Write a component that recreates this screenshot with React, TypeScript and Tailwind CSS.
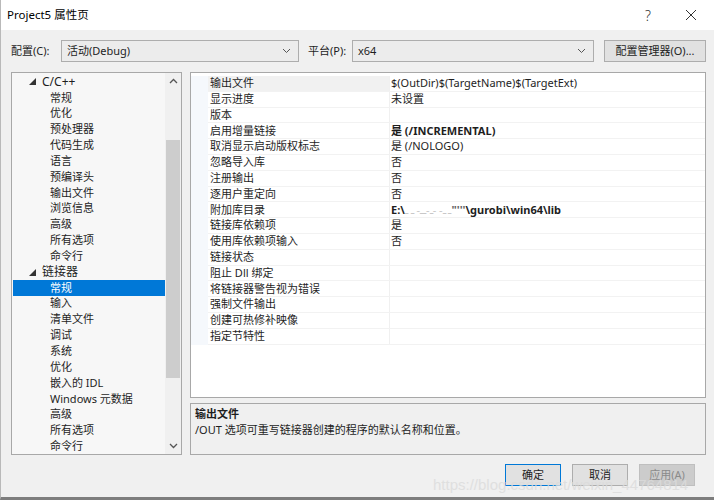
import React from "react";

const FONT = { fontFamily: '"Noto Sans", "Noto Sans CJK SC", sans-serif' };

const tree: { label: string; level: number; selected?: boolean }[] = [
  { label: "C/C++", level: 0 },
  { label: "常规", level: 1 },
  { label: "优化", level: 1 },
  { label: "预处理器", level: 1 },
  { label: "代码生成", level: 1 },
  { label: "语言", level: 1 },
  { label: "预编译头", level: 1 },
  { label: "输出文件", level: 1 },
  { label: "浏览信息", level: 1 },
  { label: "高级", level: 1 },
  { label: "所有选项", level: 1 },
  { label: "命令行", level: 1 },
  { label: "链接器", level: 0 },
  { label: "常规", level: 1, selected: true },
  { label: "输入", level: 1 },
  { label: "清单文件", level: 1 },
  { label: "调试", level: 1 },
  { label: "系统", level: 1 },
  { label: "优化", level: 1 },
  { label: "嵌入的 IDL", level: 1 },
  { label: "Windows 元数据", level: 1 },
  { label: "高级", level: 1 },
  { label: "所有选项", level: 1 },
  { label: "命令行", level: 1 },
];

const props: { name: string; value?: React.ReactNode; bold?: boolean }[] = [
  { name: "输出文件", value: "$(OutDir)$(TargetName)$(TargetExt)" },
  { name: "显示进度", value: "未设置" },
  { name: "版本" },
  { name: "启用增量链接", value: "是 (/INCREMENTAL)", bold: true },
  { name: "取消显示启动版权标志", value: "是 (/NOLOGO)" },
  { name: "忽略导入库", value: "否" },
  { name: "注册输出", value: "否" },
  { name: "逐用户重定向", value: "否" },
  {
    name: "附加库目录",
    bold: true,
    value: (
      <span className="flex items-center">
        <span>E:\</span>
        <span className="text-[#c8c8c8] font-normal tracking-[-1px]">ـ ـ- -ـ-ــ- ـ ـ</span>
        <span className="text-[#666]">"'''</span>
        <span>\gurobi\win64\lib</span>
      </span>
    ),
  },
  { name: "链接库依赖项", value: "是" },
  { name: "使用库依赖项输入", value: "否" },
  { name: "链接状态" },
  { name: "阻止 Dll 绑定" },
  { name: "将链接器警告视为错误" },
  { name: "强制文件输出" },
  { name: "创建可热修补映像" },
  { name: "指定节特性" },
];

function Chevron() {
  return (
    <svg width="9" height="6" viewBox="0 0 9 6" className="text-[#555]">
      <path d="M1 1 L4.5 4.5 L8 1" fill="none" stroke="currentColor" strokeWidth="1" />
    </svg>
  );
}

export default function App() {
  return (
    <div
      className="relative w-[714px] h-[500px] bg-[#f0f0f0] text-[11px] text-[#1e1e1e] overflow-hidden border-l border-[#b9b9b9] border-b-[3px] border-b-[#7d7d7d] flex flex-col"
      style={FONT}
    >
      {/* title bar */}
      <div className="h-[30px] bg-white flex items-center shrink-0">
        <span className="ml-[6px] text-[11.5px] text-black">Project5 属性页</span>
        <span className="ml-auto text-[14px] text-[#333] mr-[34px] font-light">?</span>
        <svg width="12" height="12" viewBox="0 0 12 12" className="mr-[17px]">
          <path d="M1 1 L11 11 M11 1 L1 11" stroke="#333" strokeWidth="1" fill="none" />
        </svg>
      </div>

      {/* config row */}
      <div className="flex items-center mt-[10px] h-[22px] shrink-0">
        <span className="ml-[10px] w-[50px]">配置(C):</span>
        <div className="w-[238px] h-[22px] border border-[#adadad] bg-[#ececec] flex items-center pl-[5px] pr-[7px]">
          <span>活动(Debug)</span>
          <span className="ml-auto"><Chevron /></span>
        </div>
        <span className="ml-[9px] w-[44px]">平台(P):</span>
        <div className="w-[242px] h-[22px] border border-[#adadad] bg-[#ececec] flex items-center pl-[5px] pr-[7px]">
          <span>x64</span>
          <span className="ml-auto"><Chevron /></span>
        </div>
        <div className="ml-[10px] w-[102px] h-[22px] border border-[#adadad] bg-[#e1e1e1] flex items-center justify-center">
          配置管理器(O)...
        </div>
      </div>

      {/* main */}
      <div className="flex mt-[10px] ml-[10px] h-[383px] shrink-0">
        {/* tree */}
        <div className="w-[171px] h-full border border-[#a8a8a8] bg-[#f7f7f7] flex">
          <div className="flex-1 pt-[1px] pl-[1px]">
            {tree.map((t, i) => (
              <div
                key={i}
                className={
                  "h-[15.85px] flex items-center " +
                  (t.selected ? "bg-[#0078d7] text-white" : "")
                }
              >
                {t.level === 0 ? (
                  <>
                    <svg width="7" height="7" viewBox="0 0 7 7" className="ml-[16px] mr-[6px]">
                      <path d="M7 0 L7 7 L0 7 Z" fill="#333" />
                    </svg>
                    <span className="text-[12px]">{t.label}</span>
                  </>
                ) : (
                  <span className="ml-[37px]">{t.label}</span>
                )}
              </div>
            ))}
          </div>
          <div className="w-[16px] h-full bg-[#f0f0f0] flex flex-col items-center">
            <div className="h-[16px] flex items-center justify-center">
              <svg width="9" height="6" viewBox="0 0 9 6">
                <path d="M1 5 L4.5 1.5 L8 5" fill="none" stroke="#555" strokeWidth="1.3" />
              </svg>
            </div>
            <div className="w-[14px] h-[238px] mt-[51px] bg-[#cdcdcd]" />
            <div className="mt-auto h-[16px] flex items-center justify-center">
              <svg width="9" height="6" viewBox="0 0 9 6">
                <path d="M1 1 L4.5 4.5 L8 1" fill="none" stroke="#555" strokeWidth="1.3" />
              </svg>
            </div>
          </div>
        </div>

        {/* right side */}
        <div className="ml-[8px] w-[516px] flex flex-col">
          <div className="h-[327px] border border-[#a8a8a8] bg-white">
            <div className="flex pt-[3px]">
              <div className="w-[17px] bg-[#f5f8fc]" />
              <div className="flex-1">
                {props.map((p, i) => (
                  <div key={i} className="h-[15.8px] flex border-b border-[#f2f2f2]">
                    <div
                      className={
                        "w-[182px] flex items-center pl-[2px] border-r border-[#f0f0f0] " +
                        (i === 0 ? "bg-[#f1f1f1]" : "")
                      }
                    >
                      {p.name}
                    </div>
                    <div className={"flex-1 flex items-center pl-[1px] " + (p.bold ? "font-bold" : "")}>
                      {p.value}
                    </div>
                  </div>
                ))}
              </div>
            </div>
          </div>
          <div className="mt-[5px] h-[52px] border border-[#a8a8a8] bg-[#f0f0f0] px-[4px] pt-[2px] leading-[16px]">
            <div className="font-bold">输出文件</div>
            <div>/OUT 选项可重写链接器创建的程序的默认名称和位置。</div>
          </div>
        </div>
      </div>

      {/* buttons */}
      <div className="flex mt-[9px] ml-[504px] gap-[11px] shrink-0">
        <div className="w-[56px] h-[22px] border border-[#0078d7] bg-[#e1e1e1] flex items-center justify-center">
          确定
        </div>
        <div className="w-[56px] h-[22px] border border-[#adadad] bg-[#e1e1e1] flex items-center justify-center">
          取消
        </div>
        <div className="w-[56px] h-[22px] border border-[#bfbfbf] bg-[#cccccc] flex items-center justify-center text-[#8a8a8a]">
          应用(A)
        </div>
      </div>

      {/* watermark */}
      <div
        className="absolute left-[432px] top-[474px] text-[15px] text-[#dcdcdc] opacity-80 whitespace-nowrap pointer-events-none"
        style={{ fontFamily: '"Liberation Sans", sans-serif' }}
      >
        https://blog.csdn.net/weixin_44764814
      </div>
    </div>
  );
}
